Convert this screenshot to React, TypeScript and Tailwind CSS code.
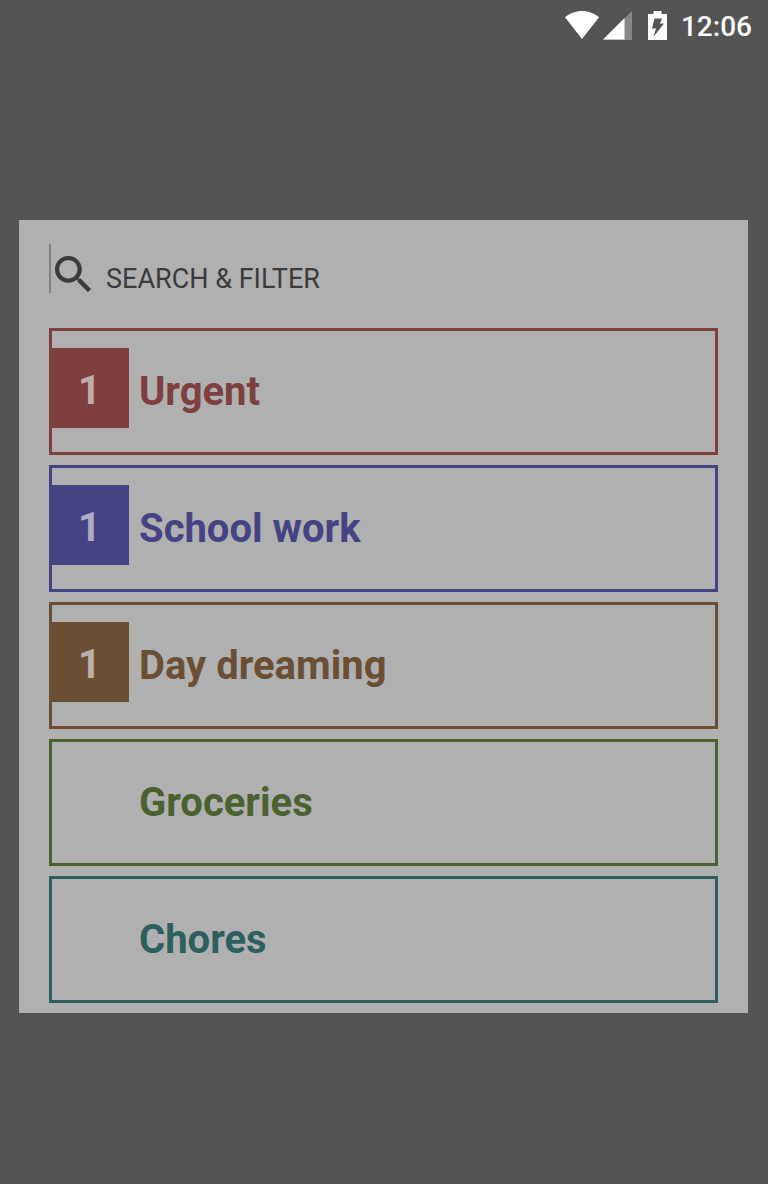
type Category = {
  name: string;
  count?: number;
  tone: string;
  badge: string;
};

const categories: Category[] = [
  { name: "Urgent", count: 1, tone: "border-[#7e3f3f] text-[#7e3f3f]", badge: "bg-[#7e3f3f] text-[#c1abab]" },
  { name: "School work", count: 1, tone: "border-[#464384] text-[#464384]", badge: "bg-[#464384] text-[#adacc2]" },
  { name: "Day dreaming", count: 1, tone: "border-[#6b4f35] text-[#6b4f35]", badge: "bg-[#6b4f35] text-[#bbb0a7]" },
  { name: "Groceries", tone: "border-[#4a6130] text-[#4a6130]", badge: "" },
  { name: "Chores", tone: "border-[#2e5f5f] text-[#2e5f5f]", badge: "" },
];

function StatusBar() {
  return (
    <header className="flex h-[50px] items-center justify-end pr-4 text-white">
      <svg className="h-7 w-[34px]" viewBox="0 0 34 28" fill="currentColor" aria-hidden="true">
        <path d="M17 28 0 6.2C4.6 2.400 10.400 0 17 0s12.400 2.400 17 6.200z" />
      </svg>
      <svg className="ml-1 h-[29px] w-[29px]" viewBox="0 0 29 29" fill="currentColor" aria-hidden="true">
        <path d="M0 29 29 0v29z" opacity=".3" />
        <path d="M0 28.500 21.500 7v21.500z" />
      </svg>
      <svg className="ml-4 h-[29px] w-[19px]" viewBox="0 0 19 29" aria-hidden="true">
        <path d="M5.500 0h8v3H19v26H0V3h5.500z" fill="#fff" />
        <path d="M6.500 7.500h7.500L12 12.500h4L5.300 26 8 17.500H4z" fill="#555" />
      </svg>
      <time className="mt-1 ml-[14px] text-[28px] leading-8 font-medium">12:06</time>
    </header>
  );
}

function CategoryCard({ category }: { category: Category }) {
  return (
    <button
      type="button"
      className={`flex h-[127px] w-full items-center border-[3px] text-left text-[40px] leading-[48px] font-bold ${category.tone}`}
    >
      <span
        className={`-ml-[3px] mb-[7px] flex h-20 w-20 shrink-0 items-center justify-center pt-[6px] pl-px ${category.badge}`}
      >
        {category.count}
      </span>
      <span className="ml-[10px]">{category.name}</span>
    </button>
  );
}

export default function App() {
  return (
    <div className="flex min-h-screen flex-col bg-[#545454] font-[Roboto,sans-serif]">
      <StatusBar />
      <main className="mt-[170px] mr-5 mb-10 ml-[19px] bg-[#b0b0b0] px-[30px] pt-6 pb-[10px]">
        <label className="flex h-[49px] items-center border-l-2 border-[#828282]">
          <svg className="mt-[11px] ml-1 h-9 w-9 shrink-0 text-[#3b3b3b]" viewBox="3 3 17.500 17.500" fill="currentColor" stroke="currentColor" strokeWidth=".1" aria-hidden="true">
            <path d="M15.500 14h-.79l-.28-.27A6.471 6.471 0 0 0 16 9.500 6.500 6.500 0 1 0 9.500 16c1.610 0 3.090-.59 4.230-1.570l.27.28v.79l5 4.990L20.490 19l-4.990-5zm-6 0C7.010 14 5 11.990 5 9.500S7.010 5 9.500 5 14 7.010 14 9.500 11.990 14 9.500 14z" />
          </svg>
          <input
            type="text"
            aria-label="Search and filter"
            placeholder="SEARCH & FILTER"
            className="mt-[22px] ml-[15px] h-8 min-w-0 flex-1 bg-transparent text-[27px] text-[#3b3b3b] outline-none placeholder:text-[#3b3b3b]"
          />
        </label>
        <ul className="mt-[35px] flex flex-col gap-[10px]">
          {categories.map((category) => (
            <li key={category.name}>
              <CategoryCard category={category} />
            </li>
          ))}
        </ul>
      </main>
    </div>
  );
}
